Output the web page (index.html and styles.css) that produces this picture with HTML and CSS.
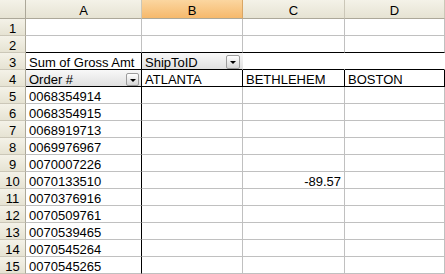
FILE: index.html
```html
<!DOCTYPE html>
<html lang="en">
<head>
    <meta charset="UTF-8">
    <title>Pivot Table</title>
    <link rel="stylesheet" href="styles.css">
</head>
<body>
    <div class="sheet">
        <!-- Column headers -->
        <div class="corner"></div>
        <div class="col-head">A</div>
        <div class="col-head sel">B</div>
        <div class="col-head">C</div>
        <div class="col-head">D</div>

        <!-- Row 1 -->
        <div class="row-head">1</div>
        <div class="cell"></div><div class="cell"></div><div class="cell"></div><div class="cell"></div>

        <!-- Row 2 -->
        <div class="row-head">2</div>
        <div class="cell pivot-top"></div><div class="cell pivot-top"></div><div class="cell pivot-top"></div><div class="cell pivot-top"></div>

        <!-- Row 3: data field + column field -->
        <div class="row-head">3</div>
        <div class="cell data-field">Sum of Gross Amt</div>
        <div class="cell field col-field">ShipToID<span class="dd"></span></div>
        <div class="cell open"></div>
        <div class="cell open"></div>

        <!-- Row 4: row field + column items -->
        <div class="row-head">4</div>
        <div class="cell field row-field">Order #<span class="dd"></span></div>
        <div class="cell item">ATLANTA</div>
        <div class="cell item">BETHLEHEM</div>
        <div class="cell item">BOSTON</div>

        <!-- Order rows -->
        <div class="row-head">5</div>
        <div class="cell order">0068354914</div><div class="cell"></div><div class="cell"></div><div class="cell"></div>
        <div class="row-head">6</div>
        <div class="cell order">0068354915</div><div class="cell"></div><div class="cell"></div><div class="cell"></div>
        <div class="row-head">7</div>
        <div class="cell order">0068919713</div><div class="cell"></div><div class="cell"></div><div class="cell"></div>
        <div class="row-head">8</div>
        <div class="cell order">0069976967</div><div class="cell"></div><div class="cell"></div><div class="cell"></div>
        <div class="row-head">9</div>
        <div class="cell order">0070007226</div><div class="cell"></div><div class="cell"></div><div class="cell"></div>
        <div class="row-head">10</div>
        <div class="cell order">0070133510</div><div class="cell"></div><div class="cell num">-89.57</div><div class="cell"></div>
        <div class="row-head">11</div>
        <div class="cell order">0070376916</div><div class="cell"></div><div class="cell"></div><div class="cell"></div>
        <div class="row-head">12</div>
        <div class="cell order">0070509761</div><div class="cell"></div><div class="cell"></div><div class="cell"></div>
        <div class="row-head">13</div>
        <div class="cell order">0070539465</div><div class="cell"></div><div class="cell"></div><div class="cell"></div>
        <div class="row-head">14</div>
        <div class="cell order">0070545264</div><div class="cell"></div><div class="cell"></div><div class="cell"></div>
        <div class="row-head">15</div>
        <div class="cell order">0070545265</div><div class="cell"></div><div class="cell"></div><div class="cell"></div>
    </div>
</body>
</html>
```

FILE: styles.css
```css
body {
    margin: 0;
    font-family: "Liberation Sans", Arial, sans-serif;
    font-size: 13px;
    color: #000;
    background-color: #fff;
}
.sheet {
    display: grid;
    grid-template-columns: 26px 116px 101px 102px 100px;
    grid-template-rows: 19px repeat(15, 17px);
    width: 445px;
    height: 274px;
    overflow: hidden;
}
.sheet > div {
    box-sizing: border-box;
    white-space: nowrap;
    overflow: hidden;
}
.corner, .col-head, .row-head {
    background: linear-gradient(#f4f2e8, #e6e3d3);
    text-align: center;
    line-height: 15px;
}
.corner {
    border-right: 1px solid #aca899;
    border-bottom: 1px solid #aca899;
}
.col-head {
    padding-top: 3px;
    border-right: 1px solid #cbc7b8;
    border-bottom: 1px solid #aca899;
}
.col-head.sel {
    background: linear-gradient(#fbd6a0, #f6b96c);
    border-right-color: #d9a665;
}
.row-head {
    padding-top: 2px;
    border-right: 1px solid #aca899;
    border-bottom: 1px solid #cbc7b8;
}
.cell {
    display: flex;
    padding: 2px 3px 0;
    line-height: 15px;
    border-right: 1px solid #c0c0c0;
    border-bottom: 1px solid #c0c0c0;
}
.pivot-top {
    border-bottom-color: #000;
}
.data-field {
    border-right-color: #000;
    border-bottom-color: #000;
}
.field {
    background: linear-gradient(#f8f8f8, #e0e0e0);
    padding-right: 2px;
    border-bottom-color: #000;
}
.col-field {
    border-right-color: transparent;
}
.row-field {
    border-right-color: #000;
}
.open {
    border-right-color: transparent;
    border-bottom-color: #000;
}
.item {
    border-right-color: #000;
    border-bottom-color: #000;
}
.order {
    border-right-color: #000;
}
.num {
    justify-content: flex-end;
}
.dd {
    box-sizing: border-box;
    width: 14px;
    height: 14px;
    margin-left: auto;
    margin-top: 0;
    border: 1px solid #9c9c9c;
    border-radius: 2px;
    background: linear-gradient(#ffffff, #d6d6d6);
    display: flex;
    align-items: center;
    justify-content: center;
}
.row-field .dd {
    margin-top: 1px;
    width: 13px;
    height: 13px;
}
.dd::after {
    content: "";
    border-left: 3px solid transparent;
    border-right: 3px solid transparent;
    border-top: 3px solid #000;
    margin-top: 1px;
}
```
